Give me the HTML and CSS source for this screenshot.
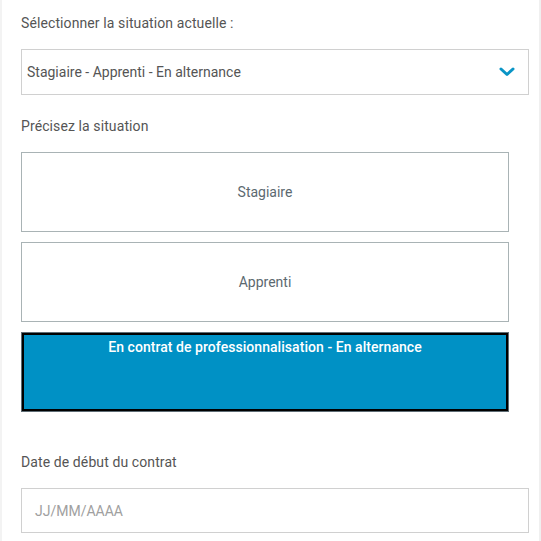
FILE: index.html
```html
<!DOCTYPE html>
<html lang="fr">
<head>
<meta charset="utf-8">
<link rel="stylesheet" href="styles.css">
</head>
<body>
<div class="page">
  <div class="form">
    <div class="label">Sélectionner la situation actuelle :</div>
    <div class="select">
      <span class="select-text">Stagiaire - Apprenti - En alternance</span>
      <svg class="chevron" width="16" height="10" viewBox="0 0 16 10"><path d="M2 2 L8 7.5 L14 2" fill="none" stroke="#0a95c6" stroke-width="3" stroke-linecap="round" stroke-linejoin="round"/></svg>
    </div>
    <div class="label label-gap">Précisez la situation</div>
    <div class="options">
      <div class="option">Stagiaire</div>
      <div class="option">Apprenti</div>
      <div class="option option-active">En contrat de professionnalisation - En alternance</div>
    </div>
    <div class="label label-gap2">Date de début du contrat</div>
    <div class="input"><span class="placeholder">JJ/MM/AAAA</span></div>
  </div>
</div>
</body>
</html>
```
FILE: styles.css
```css
html, body {
  margin: 0;
  padding: 0;
  background: #fff;
}
body {
  font-family: Roboto, "Liberation Sans", sans-serif;
  font-size: 14px;
  color: #555;
}
.page {
  width: 537px;
  height: 541px;
  border-left: 2px solid #f3f3f3;
  border-right: 2px solid #f0f0f0;
  overflow: hidden;
}
.form {
  padding: 15px 10px 0 19px;
}
.label {
  line-height: 16px;
  color: #555;
  letter-spacing: 0.1px;
}
.select {
  margin-top: 18px;
  width: 508px;
  height: 46px;
  box-sizing: border-box;
  border: 1px solid #d0d0d0;
  display: flex;
  align-items: center;
  justify-content: space-between;
  padding: 0 13px 0 5px;
}
.select-text {
  color: #555;
}
.chevron {
  display: block;
}
.label-gap {
  margin-top: 23px;
}
.options {
  margin-top: 18px;
  display: flex;
  flex-direction: column;
  gap: 10px;
  width: 488px;
}
.option {
  height: 80px;
  box-sizing: border-box;
  border: 1px solid #a9b3b5;
  display: flex;
  align-items: center;
  justify-content: center;
  color: #5c6970;
}
.option-active {
  align-items: flex-start;
  padding-top: 6px;
  background: #0091c5;
  border-color: #5e6c74;
  box-shadow: inset 0 0 0 2px #000;
  color: #fff;
  font-weight: 500;
  letter-spacing: 0.05px;
}
.label-gap2 {
  margin-top: 42px;
}
.input {
  margin-top: 18px;
  width: 508px;
  height: 45px;
  box-sizing: border-box;
  border: 1px solid #d0d0d0;
  display: flex;
  align-items: center;
  padding-left: 13px;
}
.placeholder {
  color: #a0a0a0;
}
```
